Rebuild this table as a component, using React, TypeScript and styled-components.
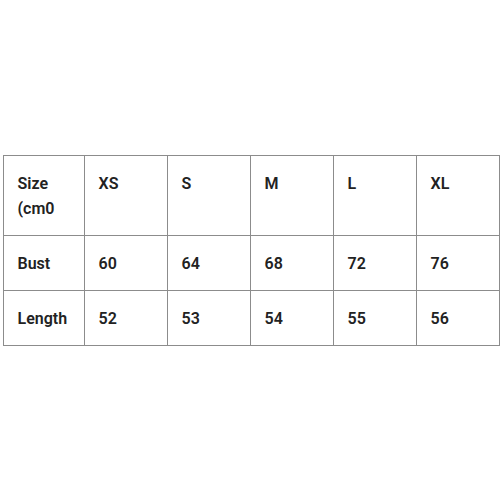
import React from "react";
import styled, { createGlobalStyle } from "styled-components";

const GlobalStyle = createGlobalStyle`
    body {
        margin: 0;
        background: #ffffff;
        font-family: Roboto, "Liberation Sans", sans-serif;
    }
`

const sizes = ["XS", "S", "M", "L", "XL"]

const rows = [
    { label: "Bust", values: [60, 64, 68, 72, 76] },
    { label: "Length", values: [52, 53, 54, 55, 56] },
]

const App = () => {
    return (
        <>
            <GlobalStyle />
            <Page>
                <SizeTable>
                    <colgroup>
                        <Col $w={81} />
                        {sizes.map((s) => <Col key={s} $w={83} />)}
                    </colgroup>
                    <tbody>
                        <Row>
                            <Cell $top>Size<br />(cm0</Cell>
                            {sizes.map((s) => <Cell key={s} $top>{s}</Cell>)}
                        </Row>
                        {rows.map((r) => (
                            <Row key={r.label}>
                                <Cell>{r.label}</Cell>
                                {r.values.map((v, i) => <Cell key={i}>{v}</Cell>)}
                            </Row>
                        ))}
                    </tbody>
                </SizeTable>
            </Page>
        </>
    )
}

export default App;

const Page = styled.div`
    height: 500px;
    display: flex;
    align-items: center;
    justify-content: center;
`

const SizeTable = styled.table`
    width: 496px;
    margin-left: 2px;
    margin-top: 1px;
    border-collapse: collapse;
    table-layout: fixed;
    border: 1px solid #8c8c8c;
`

const Col = styled.col<{ $w: number }>`
    width: ${(p) => p.$w}px;
`

const Row = styled.tr``

const Cell = styled.td<{ $top?: boolean }>`
    border: 1px solid #8c8c8c;
    padding: 15px 14px 14px;
    vertical-align: ${(p) => (p.$top ? "top" : "middle")};
    font-size: 16px;
    line-height: 25px;
    font-weight: 600;
    color: #222222;
    text-align: left;
`
